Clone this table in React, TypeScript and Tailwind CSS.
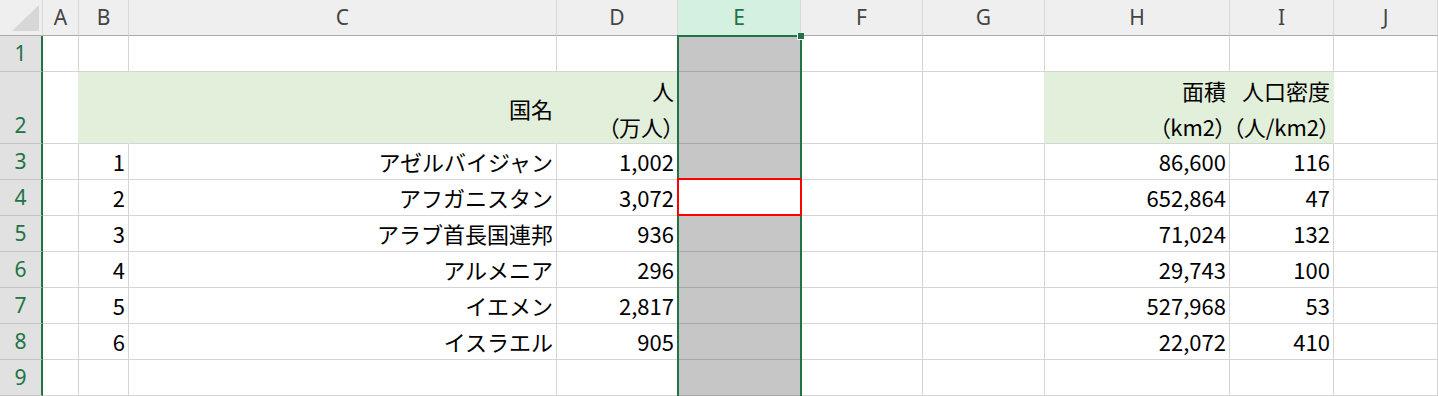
import React from 'react';

const COLS = [
  { key: 'A', w: 'w-[36px]' },
  { key: 'B', w: 'w-[50px]' },
  { key: 'C', w: 'w-[428px]' },
  { key: 'D', w: 'w-[121px]' },
  { key: 'E', w: 'w-[123px]' },
  { key: 'F', w: 'w-[122px]' },
  { key: 'G', w: 'w-[122px]' },
  { key: 'H', w: 'w-[185px]' },
  { key: 'I', w: 'w-[104px]' },
  { key: 'J', w: 'w-[104px]' },
];

const ROWS: Record<string, string>[] = [
  {},
  {},
  { B: '1', C: 'アゼルバイジャン', D: '1,002', H: '86,600', I: '116' },
  { B: '2', C: 'アフガニスタン', D: '3,072', H: '652,864', I: '47' },
  { B: '3', C: 'アラブ首長国連邦', D: '936', H: '71,024', I: '132' },
  { B: '4', C: 'アルメニア', D: '296', H: '29,743', I: '100' },
  { B: '5', C: 'イエメン', D: '2,817', H: '527,968', I: '53' },
  { B: '6', C: 'イスラエル', D: '905', H: '22,072', I: '410' },
  {},
];

// row 2 header texts
const HEAD: Record<string, string[]> = {
  C: ['国名'],
  D: ['人', '（万人）'],
  H: ['面積', '（km2）'],
  I: ['人口密度', '（人/km2）'],
};

const FILLED = ['B', 'C', 'D', 'H', 'I'];

const headFont = "[font-family:'Noto_Sans',Roboto,sans-serif]";
const cellFont = "[font-family:'Noto_Sans_CJK_JP',sans-serif]";

function RowHeader({ n, tall }: { n: number; tall?: boolean }) {
  return (
    <div
      className={`shrink-0 w-[43px] ${tall ? 'h-[72px]' : 'h-[36px]'} bg-[#e1e1e1] border-b border-b-[#c4c4c4] border-r-2 border-r-[#217346] flex items-end justify-center leading-[35px] text-[21px] text-[#217346] ${headFont}`}
    >
      {n}
    </div>
  );
}

export default function App() {
  return (
    <div className="relative w-[1438px] h-[396px] overflow-hidden bg-white">
      {/* column headers */}
      <div className="flex h-[36px]">
        <div className="relative shrink-0 w-[43px] h-full bg-[#efefef] border-r border-b border-r-[#d8d8d8] border-b-[#ababab]">
          <svg width="43" height="35" className="absolute left-0 top-0">
            <polygon points="12,31 39,31 39,5" fill="#d7d7d7" />
          </svg>
        </div>
        {COLS.map(c => (
          <div
            key={c.key}
            className={`shrink-0 ${c.w} h-full border-r border-b border-r-[#d8d8d8] border-b-[#ababab] flex items-center justify-center text-[21px] ${headFont} ${
              c.key === 'E' ? 'bg-[#d3f0e0] text-[#217346]' : 'bg-[#efefef] text-[#444444]'
            }`}
          >
            {c.key}
          </div>
        ))}
      </div>

      {/* row 1 */}
      {ROWS.map((row, i) => {
        const r = i + 1;
        const tall = r === 2;
        return (
          <div key={r} className={`flex ${tall ? 'h-[72px]' : 'h-[36px]'}`}>
            <RowHeader n={r} tall={tall} />
            {COLS.map(c => {
              const isE = c.key === 'E';
              const filled = tall && FILLED.includes(c.key);
              const bg = isE ? (r === 4 ? 'bg-white' : 'bg-[#c6c6c6]') : filled ? 'bg-[#e2efda]' : 'bg-white';
              let rb = 'border-r-[#d4d4d4]';
              if (tall && ['A', 'B', 'C', 'D', 'G', 'H', 'I'].includes(c.key)) rb = 'border-r-[#e2efda]';
              const bb = isE && r !== 4 && r !== 3 ? 'border-b-[#a8a8a8]' : 'border-b-[#d4d4d4]';
              if (tall) {
                const lines = HEAD[c.key];
                return (
                  <div
                    key={c.key}
                    className={`shrink-0 ${c.w} h-full border-r border-b ${rb} ${bb} ${bg} flex flex-col items-end justify-center pr-[3px] text-[22px] leading-[36px] text-black whitespace-nowrap ${cellFont} [font-feature-settings:'palt']`}
                  >
                    {lines && lines.map(l => <span key={l}>{l}</span>)}
                  </div>
                );
              }
              return (
                <div
                  key={c.key}
                  className={`shrink-0 ${c.w} h-full border-r border-b ${rb} ${bb} ${bg} flex items-end justify-end pr-[3px] pb-[1px] text-[22px] leading-[34px] text-black whitespace-nowrap ${cellFont}`}
                >
                  {row[c.key] ?? ''}
                </div>
              );
            })}
          </div>
        );
      })}

      {/* selection E1:E9 */}
      <div className="absolute left-[677px] top-[35px] w-[125px] h-[380px] border-2 border-[#217346]" />
      <div className="absolute left-[797px] top-[33px] w-[7px] h-[7px] bg-[#217346] border-l border-b border-white" />
      {/* red mark on E4 */}
      <div className="absolute left-[677px] top-[178px] w-[125px] h-[38px] border-2 border-[#ff0000]" />
    </div>
  );
}
